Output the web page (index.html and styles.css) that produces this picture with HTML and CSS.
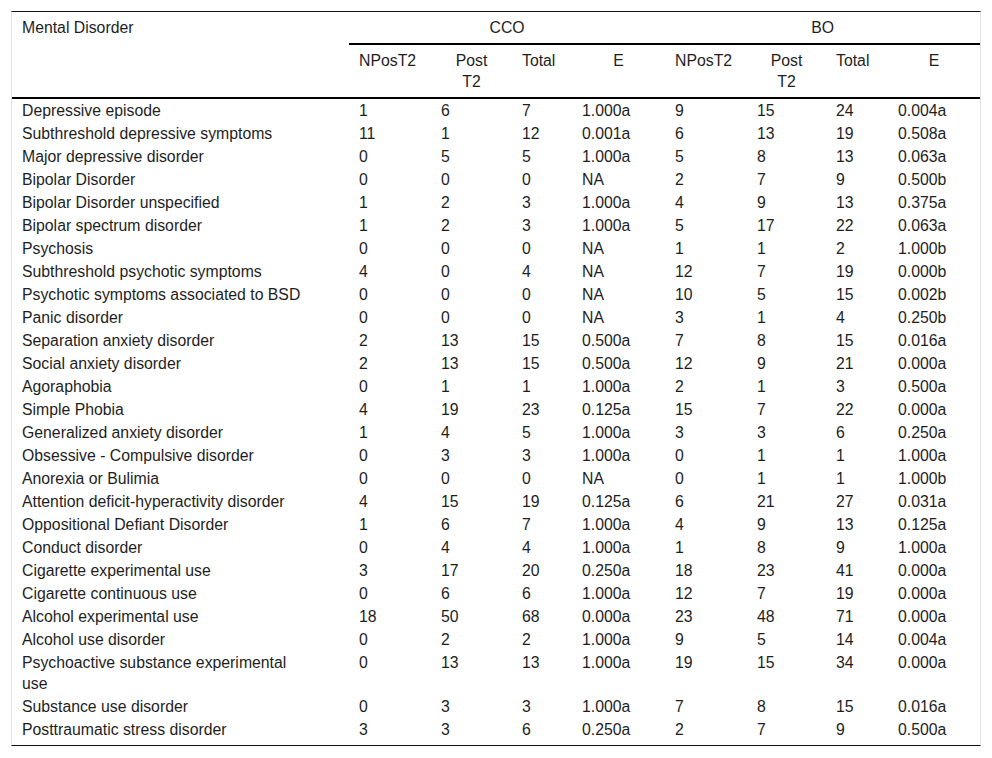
FILE: index.html
```html
<!DOCTYPE html>
<html lang="en">
<head>
<meta charset="utf-8">
<title>Mental Disorder table</title>
<link rel="stylesheet" href="styles.css">
</head>
<body>
<div class="wrap">
<table class="data">
<colgroup>
<col class="c0"><col class="c1"><col class="c2"><col class="c3"><col class="c4"><col class="c5"><col class="c6"><col class="c7"><col class="c8">
</colgroup>
<thead>
<tr class="h1">
<th rowspan="2" class="name">Mental Disorder</th>
<th colspan="4" class="group">CCO</th>
<th colspan="4" class="group">BO</th>
</tr>
<tr class="h2">
<th>NPosT2</th><th class="ctr">Post<br>T2</th><th>Total</th><th class="ctr">E</th>
<th>NPosT2</th><th class="ctr">Post<br>T2</th><th>Total</th><th class="ctr">E</th>
</tr>
</thead>
<tbody>
<tr><td class="name">Depressive episode</td><td>1</td><td>6</td><td>7</td><td>1.000a</td><td>9</td><td>15</td><td>24</td><td>0.004a</td></tr>
<tr><td class="name">Subthreshold depressive symptoms</td><td>11</td><td>1</td><td>12</td><td>0.001a</td><td>6</td><td>13</td><td>19</td><td>0.508a</td></tr>
<tr><td class="name">Major depressive disorder</td><td>0</td><td>5</td><td>5</td><td>1.000a</td><td>5</td><td>8</td><td>13</td><td>0.063a</td></tr>
<tr><td class="name">Bipolar Disorder</td><td>0</td><td>0</td><td>0</td><td>NA</td><td>2</td><td>7</td><td>9</td><td>0.500b</td></tr>
<tr><td class="name">Bipolar Disorder unspecified</td><td>1</td><td>2</td><td>3</td><td>1.000a</td><td>4</td><td>9</td><td>13</td><td>0.375a</td></tr>
<tr><td class="name">Bipolar spectrum disorder</td><td>1</td><td>2</td><td>3</td><td>1.000a</td><td>5</td><td>17</td><td>22</td><td>0.063a</td></tr>
<tr><td class="name">Psychosis</td><td>0</td><td>0</td><td>0</td><td>NA</td><td>1</td><td>1</td><td>2</td><td>1.000b</td></tr>
<tr><td class="name">Subthreshold psychotic symptoms</td><td>4</td><td>0</td><td>4</td><td>NA</td><td>12</td><td>7</td><td>19</td><td>0.000b</td></tr>
<tr><td class="name">Psychotic symptoms associated to BSD</td><td>0</td><td>0</td><td>0</td><td>NA</td><td>10</td><td>5</td><td>15</td><td>0.002b</td></tr>
<tr><td class="name">Panic disorder</td><td>0</td><td>0</td><td>0</td><td>NA</td><td>3</td><td>1</td><td>4</td><td>0.250b</td></tr>
<tr><td class="name">Separation anxiety disorder</td><td>2</td><td>13</td><td>15</td><td>0.500a</td><td>7</td><td>8</td><td>15</td><td>0.016a</td></tr>
<tr><td class="name">Social anxiety disorder</td><td>2</td><td>13</td><td>15</td><td>0.500a</td><td>12</td><td>9</td><td>21</td><td>0.000a</td></tr>
<tr><td class="name">Agoraphobia</td><td>0</td><td>1</td><td>1</td><td>1.000a</td><td>2</td><td>1</td><td>3</td><td>0.500a</td></tr>
<tr><td class="name">Simple Phobia</td><td>4</td><td>19</td><td>23</td><td>0.125a</td><td>15</td><td>7</td><td>22</td><td>0.000a</td></tr>
<tr><td class="name">Generalized anxiety disorder</td><td>1</td><td>4</td><td>5</td><td>1.000a</td><td>3</td><td>3</td><td>6</td><td>0.250a</td></tr>
<tr><td class="name">Obsessive - Compulsive disorder</td><td>0</td><td>3</td><td>3</td><td>1.000a</td><td>0</td><td>1</td><td>1</td><td>1.000a</td></tr>
<tr><td class="name">Anorexia or Bulimia</td><td>0</td><td>0</td><td>0</td><td>NA</td><td>0</td><td>1</td><td>1</td><td>1.000b</td></tr>
<tr><td class="name">Attention deficit-hyperactivity disorder</td><td>4</td><td>15</td><td>19</td><td>0.125a</td><td>6</td><td>21</td><td>27</td><td>0.031a</td></tr>
<tr><td class="name">Oppositional Defiant Disorder</td><td>1</td><td>6</td><td>7</td><td>1.000a</td><td>4</td><td>9</td><td>13</td><td>0.125a</td></tr>
<tr><td class="name">Conduct disorder</td><td>0</td><td>4</td><td>4</td><td>1.000a</td><td>1</td><td>8</td><td>9</td><td>1.000a</td></tr>
<tr><td class="name">Cigarette experimental use</td><td>3</td><td>17</td><td>20</td><td>0.250a</td><td>18</td><td>23</td><td>41</td><td>0.000a</td></tr>
<tr><td class="name">Cigarette continuous use</td><td>0</td><td>6</td><td>6</td><td>1.000a</td><td>12</td><td>7</td><td>19</td><td>0.000a</td></tr>
<tr><td class="name">Alcohol experimental use</td><td>18</td><td>50</td><td>68</td><td>0.000a</td><td>23</td><td>48</td><td>71</td><td>0.000a</td></tr>
<tr><td class="name">Alcohol use disorder</td><td>0</td><td>2</td><td>2</td><td>1.000a</td><td>9</td><td>5</td><td>14</td><td>0.004a</td></tr>
<tr><td class="name">Psychoactive substance experimental use</td><td>0</td><td>13</td><td>13</td><td>1.000a</td><td>19</td><td>15</td><td>34</td><td>0.000a</td></tr>
<tr><td class="name">Substance use disorder</td><td>0</td><td>3</td><td>3</td><td>1.000a</td><td>7</td><td>8</td><td>15</td><td>0.016a</td></tr>
<tr><td class="name">Posttraumatic stress disorder</td><td>3</td><td>3</td><td>6</td><td>0.250a</td><td>2</td><td>7</td><td>9</td><td>0.500a</td></tr>
</tbody>
</table>
</div>
</body>
</html>
```

FILE: styles.css
```css
html, body {
  margin: 0;
  padding: 0;
  background: #ffffff;
}

body {
  font-family: "Liberation Sans", Arial, sans-serif;
  font-size: 15.8px;
  color: #1e1e1e;
}

.wrap {
  box-sizing: border-box;
  width: 970px;
  margin: 11px 0 0 11px;
  border-top: 1px solid #111111;
  border-bottom: 1px solid #111111;
  border-left: 1px solid #e2e2e2;
  border-right: 1px solid #e2e2e2;
  padding-bottom: 4px;
}

.data {
  width: 968px;
  table-layout: fixed;
  border-collapse: separate;
  border-spacing: 0;
}

.c0 { width: 337px; }
.c1 { width: 82px; }
.c2 { width: 81px; }
.c3 { width: 60px; }
.c4 { width: 93px; }
.c5 { width: 82px; }
.c6 { width: 79px; }
.c7 { width: 62px; }
.c8 { width: 92px; }

.data th,
.data td {
  font-weight: normal;
  text-align: left;
  vertical-align: top;
  line-height: 21px;
  padding: 1px 10px;
}

.data thead th {
  padding-top: 5px;
  padding-bottom: 5px;
}

.data th.name {
  border-bottom: 2px solid #000000;
}

.data th.group {
  text-align: center;
  border-bottom: 2px solid #000000;
}

.data .h2 th {
  border-bottom: 2px solid #000000;
}

.data th.ctr {
  text-align: center;
}

.data td.name {
  padding-right: 46px;
}
```
